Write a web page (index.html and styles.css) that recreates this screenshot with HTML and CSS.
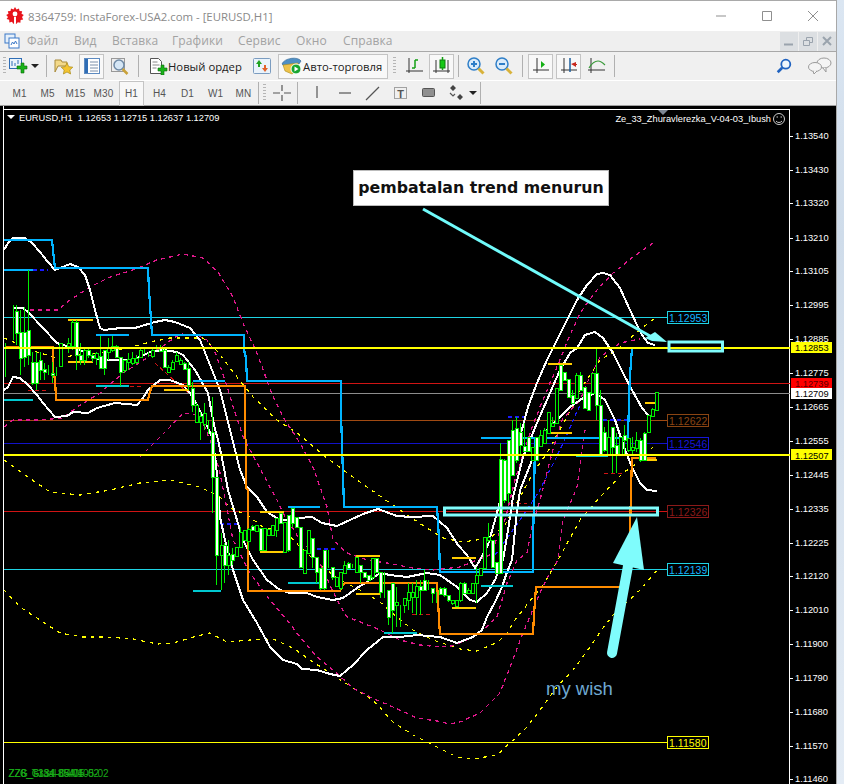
FILE: index.html
```html
<!DOCTYPE html>
<html lang="ru">
<head>
<meta charset="utf-8">
<title>8364759: InstaForex-USA2.com - [EURUSD,H1]</title>
<link rel="stylesheet" href="styles.css">
</head>
<body>
<div class="desktop">
<div class="window">
  <header class="titlebar">
    <svg class="appicon" viewBox="0 0 18 18"><path class="gear" d="M9 0l1.500 2.500 2.500-1 .5 2.600 2.700.1-.7 2.600 2.300 1.200L16 10l1.200 2.400-2.600.7-.2 2.700-2.600-.6L10.400 17 9 15l-1.600 2-1.400-2.200-2.600.6-.2-2.700-2.600-.7L2 10 .2 8l2.300-1.200-.7-2.600 2.700-.1L5 1.500l2.500 1z"/><circle class="gearhole" cx="9" cy="7" r="2.400"/><path class="gearhole" d="M8 10h2v6H8z"/></svg>
    <span class="title">8364759: InstaForex-USA2.com - [EURUSD,H1]</span>
    <div class="caption">
      <svg class="capbtn" viewBox="0 0 46 30"><path d="M18 15h10"/></svg>
      <svg class="capbtn" viewBox="0 0 46 30"><path d="M18.500 10.500h9v9h-9z"/></svg>
      <svg class="capbtn" viewBox="0 0 46 30"><path d="M18 10l10 10M28 10L18 20"/></svg>
    </div>
  </header>
  <nav class="menubar">
    <svg class="mdiicon" viewBox="0 0 16 16"><rect x="1" y="1" width="10" height="9" class="mdi1"/><rect x="5" y="5" width="10" height="10" class="mdi2"/><path class="mdi3" d="M7 12l1.500-3 1.500 2 1.500-3 1.500 3"/></svg>
    <span class="mi mi-file">Файл</span><span class="mi mi-view">Вид</span><span class="mi mi-ins">Вставка</span><span class="mi mi-charts">Графики</span><span class="mi mi-srv">Сервис</span><span class="mi mi-win">Окно</span><span class="mi mi-help">Справка</span>
    <div class="mdibtns">
      <span class="mdibtn"><svg viewBox="0 0 18 18"><path d="M4 12.500h9" class="mdistroke"/></svg></span>
      <span class="mdibtn"><svg viewBox="0 0 18 18"><path d="M4.500 8.500h6v5h-6zM7.500 8V5.500h6v5h-3" class="mdithin"/></svg></span>
      <span class="mdibtn"><svg viewBox="0 0 18 18"><path d="M5 5l8 8M13 5l-8 8" class="mdistroke"/></svg></span>
    </div>
  </nav>
  <div class="toolrow row1">
    <span class="grip"></span>
    <span class="b w-new">
      <svg class="ic" viewBox="0 0 20 18"><rect x="1.500" y="1.500" width="12" height="10" class="bluebox"/><path class="bluethin" d="M4 4v5M7 6v3M10 3v4"/><path class="plus" d="M10 7h4V4h3v3h3v3h-3v4h-3v-4h-4z" transform="translate(-1 2)"/></svg>
      <i class="caret"></i>
    </span>
    <span class="sep s1"></span>
    <span class="b"><svg class="ic" viewBox="0 0 20 18"><path class="folder" d="M1 3h6l1 2h5v4H4l-3 6z"/><path class="star" d="M13 6l1.800 3.700 4 .5-3 2.800.8 4-3.600-2-3.600 2 .8-4-3-2.800 4-.5z"/></svg></span>
    <span class="b pressed"><svg class="ic" viewBox="0 0 20 18"><rect x="2.500" y="1.500" width="15" height="15" class="winbox"/><path class="winbar" d="M3 2h3v14H3z"/><path class="winlines" d="M8 5h8M8 8h8M8 11h8M8 14h8"/></svg></span>
    <span class="b"><svg class="ic" viewBox="0 0 20 18"><rect x="1.500" y="1.500" width="13" height="13" class="greybox"/><circle cx="9" cy="8" r="5" class="lens"/><path class="handle" d="M12.500 12l5 5"/></svg></span>
    <span class="sep s2"></span>
    <span class="b w-order">
      <svg class="ic" viewBox="0 0 20 18"><path class="paper" d="M2.500 1.500h8l3 3v12h-11z"/><path class="paperl" d="M4.500 5h5M4.500 8h7M4.500 11h4"/><path class="plus" d="M11 9h3V6h3v3h3v3h-3v4h-3v-4h-3z" transform="translate(-1 2)"/></svg>
      <span class="tt">Новый ордер</span>
    </span>
    <span class="b w-ud"><svg class="ic" viewBox="0 0 20 18"><rect x="1.500" y="1.500" width="17" height="15" rx="1" class="udbox"/><path class="up" d="M7 3l3 4H8v3H6V7H4z"/><path class="down" d="M13 15l-3-4h2V8h2v3h2z"/></svg></span>
    <span class="b w-auto pressed">
      <svg class="ic hat" viewBox="0 0 22 20"><path class="hatb" d="M1 8c2-6 16-8 19-3l-2 3-15 2z"/><path class="hatf" d="M2 9l15-2 1 6-7 5-7-3z"/><circle cx="15" cy="13" r="5" class="play"/><path class="playt" d="M13.500 10.500l4 2.500-4 2.500z"/></svg>
      <span class="tt">Авто-торговля</span>
    </span>
    <span class="grip g2"></span>
    <span class="b w-c1"><svg class="ic" viewBox="0 0 20 18"><path class="axes" d="M4 1v15M1 14h17"/><path class="gl" d="M10 3v8M10 11H7M10 3h3"/></svg></span>
    <span class="b pressed w-c2"><svg class="ic" viewBox="0 0 20 18"><path class="axes" d="M4 3v13M1 14h17M16 3v13"/><rect x="8" y="3" width="5" height="8" class="cdl"/><path class="gl" d="M10.500 0v3M10.500 11v2"/></svg></span>
    <span class="sep s3"></span>
    <span class="b w-zi"><svg class="ic" viewBox="0 0 20 18"><circle cx="8" cy="7" r="6" class="zl"/><path class="zm" d="M5 7h6M8 4v6"/><path class="zh" d="M12.500 11.500l5 5"/></svg></span>
    <span class="b w-zo"><svg class="ic" viewBox="0 0 20 18"><circle cx="8" cy="7" r="6" class="zl"/><path class="zm" d="M5 7h6"/><path class="zh" d="M12.500 11.500l5 5"/></svg></span>
    <span class="sep s4"></span>
    <span class="b pressed w-s1"><svg class="ic" viewBox="0 0 20 18"><path class="axes" d="M6 1v15M2 13h16"/><path class="tri" d="M10 4l4 3.500-4 3.500z"/></svg></span>
    <span class="b pressed w-s2"><svg class="ic" viewBox="0 0 20 18"><path class="axes" d="M5 1v15M2 13h16"/><path class="bluev" d="M11 1v14"/><path class="redt" d="M12 7l5-2v2h1v1h-1v2z"/></svg></span>
    <span class="b w-s3"><svg class="ic" viewBox="0 0 20 18"><path class="axes" d="M4 1v15M1 13h17"/><path class="gc" d="M2 11c3-5 6-7 9-7 3 0 5 2 7 4"/></svg></span>
    <span class="sep s5"></span>
    <div class="rtools">
      <svg class="ic rs" viewBox="0 0 20 20"><circle cx="12" cy="8" r="5" class="srch"/><path class="srchh" d="M8 12l-5 5"/></svg>
      <svg class="ic rc" viewBox="0 0 24 18"><ellipse cx="16" cy="6" rx="7" ry="5" class="bub"/><path class="bub" d="M15 11l3 4 0-4"/><ellipse cx="7" cy="10" rx="6.500" ry="4.500" class="bub"/><path class="bub" d="M5 14l1 3 3-3"/></svg>
    </div>
  </div>
  <div class="toolrow row2">
    <span class="tf">M1</span><span class="tf">M5</span><span class="tf">M15</span><span class="tf">M30</span><span class="tf pressed">H1</span><span class="tf">H4</span><span class="tf">D1</span><span class="tf">W1</span><span class="tf">MN</span>
    <span class="sep s6"></span>
    <span class="grip g3"></span>
    <span class="b"><svg class="ic" viewBox="0 0 20 18"><path class="dr" d="M1 9h7M12 9h7M10 1v6M10 11v6"/></svg></span>
    <span class="sep s7"></span>
    <span class="b"><svg class="ic" viewBox="0 0 20 18"><path class="dr" d="M10 2v12"/></svg></span>
    <span class="b"><svg class="ic" viewBox="0 0 20 18"><path class="dr" d="M4 9h12"/></svg></span>
    <span class="b"><svg class="ic" viewBox="0 0 20 18"><path class="dr" d="M3 16L16 3"/></svg></span>
    <span class="b"><svg class="ic" viewBox="0 0 20 18"><rect x="3.500" y="3.500" width="12" height="11" class="tbox"/><text x="9.500" y="13.500" class="tglyph">T</text></svg></span>
    <span class="b"><svg class="ic" viewBox="0 0 20 18"><rect x="3.500" y="4.500" width="12" height="8" rx="1" class="rrect"/></svg></span>
    <span class="b"><svg class="ic" viewBox="0 0 20 18"><path class="arrs" d="M6 1l3 3-3 3-3-3zM13 10l3 3-3 3-3-3z"/><path class="dr" d="M3 9l3 3 2-2"/></svg></span>
    <i class="caret c2"></i>
    <span class="sep s8"></span>
  </div>
  <main class="chart">
    <svg class="plot" viewBox="0 106 836 678">
      <rect class="bg" x="0" y="106" width="836" height="678"/>
      <path class="frame" d="M3.500 106V784M3 109.500H790M789.500 109V784"/>

      <path class="hl cyan" d="M4 317.500H667M4 569.500H667"/>
      <path class="hl red" d="M4 383.500H790M4 511.500H667"/>
      <path class="hl gray" d="M4 393.500H790"/>
      <path class="hl brown" d="M4 420.500H667"/>
      <path class="hl blue" d="M4 443.500H667"/>
      <path class="hl yel1" d="M4 742.500H667"/>

      <path class="dash ydash" d="M4 338L20 345 37 352 57 358 77 355 100 353 127 348 150 342 170 338 203 338 218 352 233 372 253 397 277 420 297 433 327 458 357 480 390 503 410 517 427 528 443 538 463 542 490 538 505 525 520 497 533 473 547 453 567 417 580 390 600 360 617 350 637 332 655 318"/>
      <path class="dash ydash" d="M4 460L25 475 50 492 80 495 110 490 140 483 170 480 200 487 220 497 230 508 247 515 263 527 287 533 300 547 320 565 340 580 360 590 380 602 397 617 413 630 433 640 460 649 477 651 498 642 507 633 517 617 523 610 533 597 543 585 552 570 558 560 580 520 600 497 623 473 637 463 653 447"/>
      <path class="dash ydash" d="M4 590L20 607 43 622 60 633 83 637 107 637 133 639 157 644 173 643 197 636 210 633 227 642 250 640 273 639 293 648 310 660 333 675 353 688 373 700 393 722 413 735 433 745 457 757 473 759 497 755 510 743 527 727 540 710 557 687 573 670 590 647 603 628 613 615 640 590 657 570"/>

      <path class="dash mdash" d="M30 310L58 310 70 300 90 287 110 277 133 270 157 260 183 254 203 258 218 272 233 297 243 323 257 353 273 397 285 420 300 443 313 467 327 507 333 540 347 553 367 560 387 563 413 568 433 570 460 567 490 555 505 520 515 480 530 433 540 407 550 383 560 360 567 342 580 313 597 290 613 273 633 257 653 243"/>
      <path class="dash mdash" d="M4 427L13 420 40 420 63 418 77 407 100 393 123 373 147 358 167 343 180 334 197 335 207 340 215 352 225 380 232 403 243 437 257 463 277 500 283 513 300 540 317 557 337 600 347 617 363 623 380 630 400 640 420 645 440 647 452 646 467 640 483 630 497 617 507 583 517 560 527 553 532 527 540 500 552 453 562 420 580 400 587 383 600 357 620 343 640 339"/>
      <path class="dash mdash" d="M140 457L157 440 170 427 183 413 197 415 203 423 213 447 220 473 233 540 250 573 270 600 287 620 300 637 317 657 333 670 353 688 370 697 393 707 417 718 437 721 450 724 460 722 480 713 500 693 510 667 523 633 540 593 550 573 558 560 563 520 577 487 585 430"/>
      <path class="dash bdash" d="M33 270H48M220 524H237M317 549H337M508 417H528M603 420H628M495 555L520 520 540 490 560 450 580 405"/>
      <path class="dash rdash" d="M28 390H48M123 386H143M155 363L188 393M412 614H432M510 503H527M604 473H623M200 591H221"/>

      <path class="env" d="M4 250L8 243 13 238 25 238 32 243 40 252 48 262 55 270 60 268 70 264 78 267 85 275 90 290 95 310 100 328 104 330 113 329 120 328 135 328 145 325 155 322 165 320 175 322 190 328 200 340 210 365 220 390 230 430 240 470 247 487 257 497 267 512 280 520 288 520 298 518 312 517 322 523 337 526 350 520 363 514 378 509 397 516 412 517 433 516 447 528 458 545 467 555 475 568 480 560 488 545 495 520 503 490 510 460 520 437 528 407 537 383 547 360 557 340 567 320 577 300 587 285 597 274 603 273 610 275 620 288 630 310 637 325 642 335 648 343 655 345"/>
      <path class="env" d="M13 308L23 308 28 312 43 328 57 343 63 345 80 350 100 360 133 360 150 352 163 350 177 352 183 355 195 370 208 393 214 425 218 440 223 463 228 490 237 520 243 540 253 560 267 580 280 590 290 593 307 593 317 597 333 600 343 598 357 588 370 580 380 573 390 575 407 577 427 573 440 575 457 587 470 600 477 602 487 593 495 580 503 560 508 530 513 497 523 457 537 423 550 393 560 370 570 353 577 348 585 335 595 332 603 338 613 353 623 373 632 390 642 408 648 415"/>
      <path class="env" d="M4 390L8 387 13 377 20 378 28 385 37 395 43 403 55 417 67 416 73 412 88 413 97 408 115 403 137 405 143 398 148 390 160 380 170 380 183 385 193 397 203 417 212 437 216 463 220 517 225 540 233 570 243 600 257 623 270 647 283 660 297 664 302 669 317 670 330 674 340 676 353 665 367 650 383 637 400 637 417 635 440 637 457 643 473 637 482 630 487 617 495 602 502 587 507 572 512 560 516 520 520 490 527 473 537 447 547 430 560 417 570 407 583 398 595 393 605 400 615 420 625 450 632 467 640 483 647 490 657 491"/>

      <path class="seg sky" d="M4 240H52L53 250 55 268H148L149 290 151 320 152 335H244V350L246 358 247 381H341V413L342 445 343 475 344 507H437L438 522 439 540 440 572H533V540L534 500 535 438M481 438H628L629 400 630 375 632 348"/>
      <path class="seg sky" d="M4 270H33M96 335H129M193 381H225M288 507H320"/>
      <path class="seg teal" d="M4 400H33M96 386H129M193 591H221M288 583H320M384 633H417M481 586H513M576 456H608"/>
      <path class="seg gold" d="M68 320H93M68 362H93M164 390H189M260 512H284M260 552H284M356 556H380M356 594H380M452 558H476M452 608H476M548 364H572M548 433H572M645 403H656M640 460H657"/>
      <path class="seg orange" d="M5 347H53V377L55 377 56 400H148L150 392 152 386H245V438L246 440V488L248 490V591H340L343 585 345 583H437L438 600 439 620 440 634H533L534 615 535 600 536 587H628L629 560 630 530 631 490 632 458H656"/>

      <path class="wick" d="M5 343V377M13 305V340M16 305V345M20 310V375M24 307V367M28 270V365M32 352V385M36 352V390M40 352V380M44 363V380M48 365V375M52 362V383M56 367V376M60 343V366M68 338V353M72 320V350M76 320V370M80 343V365M84 347V365M88 348V358M92 353V362M96 352V365M100 336V368M104 350V375M108 338V360M112 336V352M116 345V358M120 357V386M124 360V373M128 353V370M132 352V365M136 355V364M140 347V358M144 348V354M148 352V357M152 348V358M156 345V350M160 345V352M164 348V367M168 365V373M172 360V370M176 352V362M180 358V365M184 362V370M188 362V390M192 382V412M196 403V423M200 412V440M204 403V430M208 420V434M212 397V513M216 477V585M221 533V590M224 543V583M228 540V575M232 548V565M236 547V557M240 527V547M244 530V540M248 528V550M252 525V530M256 525V531M260 528V550M264 528V550M268 529V535M272 525V535M276 518V537M280 513V523M284 522V552M288 515V552M292 508V527M296 517V527M300 527V567M304 550V573M308 530V553M312 538V568M316 557V583M320 568V590M324 550V590M328 550V568M332 567V580M336 577V587M340 572V590M344 561V573M348 562V568M352 564V568M356 557V572M360 565V583M364 572V578M368 575V581M372 558V580M376 558V572M380 572V598M384 572V598M388 590V625M392 583V633M396 587V627M400 605V627M404 598V613M408 583V610M412 583V613M416 580V615M420 580V615M424 570V590M428 580V590M432 588V603M436 592V603M440 587V595M444 587V597M448 595V602M452 600V605M456 600V607M460 582V602M464 582V594M468 588V594M472 583V594M476 567V603M480 568V575M484 537V568M488 523V542M492 540V567M496 562V573M500 443V573M504 459V503M508 440V503M512 420V475M516 417V463M520 423V455M524 423V452M528 437V450M532 447V460M536 437V460M540 430V446M544 428V443M548 412V433M552 417V427M556 388V423M560 365V390M564 372V380M568 379V397M572 390V403M576 373V398M580 372V390M584 387V408M588 392V410M592 373V393M596 348V420M600 390V455M604 427V452M608 420V455M612 427V473M616 433V473M620 437V455M624 425V455M628 438V452M632 437V455M636 432V452M640 438V462M644 432V460M648 415V432M652 408V416M656 392V410"/>
      <path class="bodyb" d="M58 343h3V366h-3zM66 343h3V346h-3zM70 322h3V346h-3zM82 350h3V360h-3zM94 353h3V358h-3zM106 348h3V352h-3zM110 346h3V350h-3zM122 360h3V370h-3zM126 359h3V362h-3zM130 358h3V363h-3zM134 358h3V362h-3zM138 350h3V357h-3zM150 350h3V356h-3zM166 367h3V372h-3zM170 362h3V369h-3zM174 355h3V361h-3zM178 360h3V364h-3zM194 405h3V422h-3zM198 416h3V422h-3zM202 413h3V424h-3zM219 545h3V555h-3zM226 555h3V565h-3zM234 547h3V556h-3zM238 532h3V547h-3zM242 530h3V540h-3zM246 529h3V541h-3zM254 525h3V531h-3zM262 528h3V550h-3zM266 529h3V535h-3zM270 525h3V535h-3zM274 518h3V530h-3zM282 522h3V552h-3zM302 550h3V573h-3zM306 530h3V553h-3zM334 577h3V586h-3zM338 572h3V588h-3zM342 565h3V573h-3zM354 557h3V572h-3zM370 558h3V577h-3zM394 602h3V605h-3zM402 598h3V605h-3zM406 592h3V600h-3zM410 592h3V597h-3zM414 586h3V597h-3zM450 600h3V603h-3zM454 600h3V606h-3zM458 583h3V600h-3zM466 590h3V593h-3zM470 583h3V593h-3zM474 575h3V583h-3zM478 568h3V575h-3zM482 537h3V568h-3zM486 537h3V540h-3zM530 447h3V460h-3zM538 435h3V446h-3zM542 430h3V443h-3zM546 412h3V433h-3zM550 423h3V426h-3zM554 388h3V423h-3zM574 375h3V398h-3zM590 373h3V393h-3zM606 437h3V455h-3zM618 437h3V455h-3zM626 438h3V450h-3zM630 447h3V450h-3zM634 440h3V448h-3zM646 415h3V432h-3zM650 409h3V416h-3zM654 392h3V410h-3z"/>
      <path class="bodyw" d="M14 311h3V333h-3zM18 332h3V358h-3zM22 332h3V357h-3zM26 330h3V355h-3zM30 362h3V383h-3zM34 362h3V383h-3zM38 360h3V370h-3zM42 369h3V372h-3zM50 373h3V375h-3zM74 322h3V355h-3zM78 355h3V360h-3zM86 350h3V355h-3zM90 355h3V358h-3zM98 356h3V368h-3zM102 350h3V368h-3zM114 346h3V357h-3zM118 357h3V372h-3zM158 347h3V351h-3zM162 350h3V367h-3zM182 363h3V369h-3zM186 368h3V385h-3zM190 388h3V405h-3zM210 432h3V477h-3zM214 477h3V555h-3zM222 545h3V565h-3zM230 554h3V560h-3zM250 526h3V530h-3zM258 528h3V550h-3zM278 513h3V523h-3zM286 515h3V550h-3zM290 508h3V523h-3zM294 517h3V527h-3zM298 527h3V567h-3zM310 538h3V557h-3zM314 557h3V572h-3zM318 568h3V588h-3zM322 550h3V588h-3zM330 567h3V577h-3zM346 563h3V568h-3zM358 565h3V572h-3zM362 572h3V577h-3zM366 575h3V580h-3zM374 558h3V572h-3zM378 572h3V592h-3zM386 590h3V617h-3zM390 583h3V610h-3zM418 586h3V590h-3zM422 580h3V590h-3zM430 588h3V593h-3zM438 588h3V594h-3zM442 588h3V595h-3zM446 595h3V600h-3zM462 583h3V593h-3zM490 540h3V567h-3zM494 562h3V573h-3zM498 459h3V573h-3zM502 460h3V500h-3zM506 440h3V493h-3zM510 430h3V475h-3zM514 428h3V460h-3zM518 432h3V445h-3zM522 446h3V451h-3zM526 437h3V451h-3zM534 437h3V460h-3zM558 365h3V390h-3zM562 372h3V380h-3zM566 379h3V397h-3zM570 395h3V403h-3zM578 375h3V390h-3zM582 387h3V408h-3zM586 392h3V410h-3zM594 373h3V405h-3zM598 405h3V455h-3zM602 432h3V450h-3zM610 427h3V447h-3zM614 445h3V455h-3zM622 435h3V440h-3zM638 440h3V460h-3zM642 433h3V460h-3z"/>
      <path class="seg yellowthick" d="M4 347.500H790M4 455H790"/>

      <path class="dim" d="M658 110h10l-5 5z"/>
      <path class="wtri" d="M7 115h8l-4 4z"/>
      <text x="19" y="121" class="txt">EURUSD,H1  1.12653 1.12715 1.12637 1.12709</text>
      <text x="771" y="122" class="txt end">Ze_33_Zhuravlerezka_V-04-03_Ibush</text>
      <circle cx="779" cy="119" r="5.500" class="smile"/><path class="smile" d="M776 121c1.500 2 4.500 2 6 0M776.500 117h1.500M780.500 117h1.500"/>

      <g class="tgs">
        <rect x="667.500" y="311.500" width="41" height="12" class="t-cy"/><text x="669" y="321.500" class="tg cyt">1.12953</text>
        <rect x="667.500" y="414.500" width="41" height="12" class="t-br"/><text x="669" y="424.500" class="tg brt">1.12622</text>
        <rect x="667.500" y="437.500" width="41" height="12" class="t-bl"/><text x="669" y="447.500" class="tg blt">1.12546</text>
        <rect x="667.500" y="505.500" width="41" height="12" class="t-rd"/><text x="669" y="515.500" class="tg rdt">1.12326</text>
        <rect x="667.500" y="563.500" width="41" height="12" class="t-cy"/><text x="669" y="573.500" class="tg cyt">1.12139</text>
        <rect x="667.500" y="736.500" width="41" height="12" class="t-ye"/><text x="669" y="746.500" class="tg yet">1.11580</text>
      </g>
      <g class="axis">
        <path class="tick" d="M790 136h3M790 170h3M790 203h3M790 238h3M790 271h3M790 305h3M790 339h3M790 373h3M790 407h3M790 441h3M790 475h3M790 509h3M790 543h3M790 576h3M790 610h3M790 644h3M790 678h3M790 712h3M790 746h3M790 779h3"/>
        <g class="axl">
        <text x="795" y="139.500" class="ax">1.13540</text>
        <text x="795" y="173.500" class="ax">1.13430</text>
        <text x="795" y="207" class="ax">1.13320</text>
        <text x="795" y="241.500" class="ax">1.13210</text>
        <text x="795" y="275" class="ax">1.13105</text>
        <text x="795" y="308.500" class="ax">1.12995</text>
        <text x="795" y="342.500" class="ax">1.12885</text>
        <text x="795" y="376.500" class="ax">1.12775</text>
        <text x="795" y="410.500" class="ax">1.12665</text>
        <text x="795" y="444.500" class="ax">1.12555</text>
        <text x="795" y="478.500" class="ax">1.12445</text>
        <text x="795" y="512.500" class="ax">1.12335</text>
        <text x="795" y="546.500" class="ax">1.12225</text>
        <text x="795" y="579.500" class="ax">1.12120</text>
        <text x="795" y="613.500" class="ax">1.12010</text>
        <text x="795" y="647.500" class="ax">1.11900</text>
        <text x="795" y="681.500" class="ax">1.11790</text>
        <text x="795" y="715.500" class="ax">1.11680</text>
        <text x="795" y="749.500" class="ax">1.11570</text>
        <text x="795" y="783" class="ax">1.11460</text>
        </g>
        <rect x="791" y="342" width="41" height="11" class="a-ye"/><text x="795" y="351" class="ax dk">1.12853</text>
        <rect x="791" y="378" width="41" height="11" class="a-rd"/><text x="795" y="387" class="ax rdk">1.12739</text>
        <rect x="791" y="388" width="41" height="11" class="a-wh"/><text x="795" y="397" class="ax dk">1.12709</text>
        <rect x="791" y="449" width="41" height="11" class="a-ye"/><text x="795" y="458.500" class="ax dk">1.12507</text>
      </g>

      <path class="ann" d="M423 209L650 336"/>
      <path class="annf" d="M667 342L652 341 645 338 655 332z"/>
      <rect x="669" y="342" width="53.500" height="9" class="annbox"/>
      <rect x="444.500" y="508" width="213" height="7" class="annbox"/>
      <path class="annthick" d="M612 653L628 566"/>
      <path class="annf" d="M637 517L644 570 613 563z"/>

      <text x="8.500" y="777" class="zz">ZZ8_Graal-04/05-02</text>
      <text x="8.500" y="777" class="zz">ZZ6_T334-854/105-02</text>
      <text x="20" y="777" class="zz">G_s134-85/04</text>
      <text x="546" y="695" class="wish">my wish</text>
    </svg>
    <div class="callout">pembatalan trend menurun</div>
  </main>
</div>
<aside class="strip"></aside>
</div>
</body>
</html>
```
FILE: styles.css
```css
html,body{margin:0;padding:0;background:#fff}
body{width:844px;height:784px;overflow:hidden;font-family:"Open Sans","Noto Sans",sans-serif}
.desktop{display:flex;width:844px;height:784px}
.window{width:837px;display:flex;flex-direction:column;background:#f0f0f0;box-sizing:border-box;border-right:1px solid #a8a8a8}
.strip{flex:1;background:linear-gradient(#dbe6f2,#cfdcea 30%,#e4ecf5)}

.titlebar{height:30px;display:flex;align-items:center;background:#fff;border-top:1px solid #a9a9a9;padding-left:6px}
.appicon{width:18px;height:18px;margin-right:4px}
.gear{fill:#e8141c}
.gearhole{fill:#fff}
.title{font-size:11.400px;color:#8a8a8a;white-space:nowrap}
.caption{margin-left:auto;display:flex}
.capbtn{width:46px;height:30px}
.capbtn path{fill:none;stroke:#8f8f8f;stroke-width:1}

.menubar{height:20px;position:relative;display:flex;align-items:center;background:#efefef}
.mdiicon{width:16px;height:16px;position:absolute;left:4px;top:2px}
.mdi1{fill:#e6f0fa;stroke:#3a78c8}
.mdi2{fill:#fff;stroke:#3a78c8}
.mdi3{fill:none;stroke:#3a78c8}
.mi{position:absolute;top:2px;font-size:12px;line-height:16px;color:#a2a2a2;letter-spacing:.1px}
.mi-file{left:27px}.mi-view{left:74px}.mi-ins{left:112px}.mi-charts{left:172px}.mi-srv{left:238px}.mi-win{left:296px}.mi-help{left:343px}
.mdibtns{margin-left:auto;display:flex;gap:1px;height:19px}
.mdibtn{width:18px;background:#dcdfe2;display:block}
.mdibtn svg{width:18px;height:18px;display:block}
.mdistroke{fill:none;stroke:#9aa3ad;stroke-width:2}
.mdithin{fill:none;stroke:#9aa3ad;stroke-width:1}

.toolrow{display:flex;align-items:center;box-sizing:border-box;border-top:1px solid #a8a8a8;background:#f0f0f0}
.row1{height:29px;padding-left:3px;position:relative}
.row2{height:26px;padding-left:7px;border-top:1px solid #fff;border-bottom:1px solid #a0a0a0;gap:3px}
.grip{width:3px;height:18px;background:repeating-linear-gradient(#b5b5b5 0 1px,#f0f0f0 1px 3px);flex:none}
.b{width:25px;height:25px;display:flex;align-items:center;justify-content:center;flex:none;box-sizing:border-box;margin-right:3px}
.pressed{background:#f8f8f8;border:1px solid #c4c4c4}
.ic{width:20px;height:18px;flex:none;display:block}
.sep{width:1px;height:22px;background:#b0b0b0;flex:none}
.w-new{width:34px;margin-left:2px;margin-right:0;justify-content:flex-start}
.caret{width:0;height:0;border:4px solid transparent;border-top:4px solid #222;border-bottom:0;margin-left:3px;flex:none}
.s1{margin:0 4px 0 4px}
.s2{margin:0 9px 0 3px}
.w-order{width:98px;margin-right:3px;justify-content:flex-start}
.tt{font-size:11.300px;color:#222;white-space:nowrap;margin-left:0}
.w-ud{margin-right:4px}
.w-auto{width:110px;justify-content:flex-start;padding-left:2px;margin-right:5px}
.w-auto .tt{margin-left:0}
.hat{width:22px;height:20px}
.g2{margin-right:6px}
.w-c1{margin-right:2px}
.w-c2{margin-right:4px}
.s3{margin-right:4px}
.w-zi{margin-right:3px}
.w-zo{margin-right:6px}
.s4{margin-right:5px}
.s5{margin-left:2px}
.rtools{position:absolute;right:0;top:0;height:28px;display:flex;align-items:center}
.rs{margin-right:14px}
.rc{width:24px;margin-right:4px}

.tf{width:25px;height:25px;box-sizing:border-box;display:flex;align-items:center;justify-content:center;font-size:10px;color:#555;flex:none;font-family:"Liberation Sans",sans-serif;letter-spacing:.1px}
.row2 .b{margin-right:0}
.s6{margin-left:-1px;height:22px}
.g3{margin-left:1px}
.s7{margin:0 3px 0 0}
.c2{margin-left:-3px}
.s8{margin-left:0}

.bluebox{fill:#eaf3fb;stroke:#2f6db5}
.bluethin{fill:none;stroke:#2f6db5}
.plus{fill:#19b219;stroke:#0c6a0c;stroke-width:.6}
.folder{fill:#f3d98a;stroke:#a98b3a}
.star{fill:#f4c430;stroke:#a98b1a;stroke-width:.7}
.winbox{fill:#fff;stroke:#5d8ac0}
.winbar{fill:#2f6db5}
.winlines{stroke:#7a8ea8;fill:none}
.greybox{fill:#eee;stroke:#999}
.lens{fill:#d5e6f5;stroke:#6f8aa6;stroke-width:1.500}
.handle{stroke:#c9a23a;stroke-width:2.500}
.paper{fill:#fff;stroke:#555}
.paperl{stroke:#888;fill:none}
.udbox{fill:#eaf3fb;stroke:#7b9cc0}
.up{fill:#21a321}
.down{fill:#e2622a}
.hatb{fill:#4f8fc4;stroke:#2a5f8f;stroke-width:.6}
.hatf{fill:#eec24a;stroke:#a98b1a;stroke-width:.6}
.play{fill:#18a62f;stroke:#fff}
.playt{fill:#fff}
.axes{fill:none;stroke:#333;stroke-width:1}
.gl{fill:none;stroke:#13a013;stroke-width:1.500}
.cdl{fill:#14c814;stroke:#0d7a0d}
.zl{fill:#dcecfa;stroke:#2f7fc8;stroke-width:1.500}
.zm{stroke:#2f7fc8;stroke-width:2;fill:none}
.zh{stroke:#d8b23a;stroke-width:3}
.tri{fill:#14b014}
.bluev{stroke:#1d5f9e;stroke-width:1.500}
.redt{fill:#c8281e}
.gc{fill:none;stroke:#3a9a3a;stroke-width:1.200}
.srch{fill:#eef5fc;stroke:#1f62c0;stroke-width:2}
.srchh{stroke:#1f62c0;stroke-width:3}
.bub{fill:#f4f4f4;stroke:#9a9a9a}
.dr{fill:none;stroke:#555;stroke-width:1.200}
.tbox{fill:none;stroke:#555;stroke-dasharray:1 1}
.tglyph{font:bold 11px "Liberation Sans",sans-serif;fill:#555;text-anchor:middle}
.rrect{fill:#8f8f8f;stroke:#555}
.arrs{fill:#444}

.chart{flex:1;position:relative;background:#000;min-height:0}
.plot{display:block;width:836px;height:678px}
.bg{fill:#000}
.frame{fill:none;stroke:#fff;stroke-width:1;shape-rendering:crispEdges}
.hl{fill:none;stroke-width:1;shape-rendering:crispEdges}
.cyan{stroke:#1fd3e4}.red{stroke:#d01414}.gray{stroke:#8c8c8c}.brown{stroke:#a04a12}.blue{stroke:#1212c8}.yel1{stroke:#ffff00}
.dash{fill:none;shape-rendering:crispEdges}
.ydash{stroke:#ffff00;stroke-width:1.200;stroke-dasharray:3.500 5}
.mdash{stroke:#e0188c;stroke-width:1.300;stroke-dasharray:4 4}
.bdash{stroke:#1a1aff;stroke-width:1.300;stroke-dasharray:4 3}
.rdash{stroke:#d01414;stroke-width:1;stroke-dasharray:4 3}
.env{fill:none;stroke:#fff;stroke-width:2;shape-rendering:crispEdges}
.seg{fill:none;stroke-width:2.200;shape-rendering:crispEdges}
.sky{stroke:#00b4ff}
.teal{stroke:#00c8d0}
.gold{stroke:#ffcc00}
.orange{stroke:#ff8c00}
.yellowthick{stroke:#ffff00;stroke-width:2}
.wick{fill:none;stroke:#00f000;stroke-width:1;shape-rendering:crispEdges;transform:translateX(.5px)}
.bodyb{fill:#000;stroke:#00f000;stroke-width:1;shape-rendering:crispEdges;transform:translateX(1px)}
.bodyw{fill:#fff;stroke:#00f000;stroke-width:1;shape-rendering:crispEdges;transform:translateX(1px)}
.dim{fill:#7c8794}
.wtri{fill:#fff}
.txt{font:9.270px "Liberation Sans",sans-serif;fill:#fff;white-space:pre}
.end{text-anchor:end}
.smile{fill:none;stroke:#ccc;stroke-width:1}
.tg{font:10.500px "Liberation Sans",sans-serif;letter-spacing:.05px}
.tgs rect{fill:#000;stroke-width:1;shape-rendering:crispEdges}
.t-cy{stroke:#1fd3e4}.cyt{fill:#12b4ff}
.t-br{stroke:#8a4513}.brt{fill:#8a4513}
.t-bl{stroke:#1616d8}.blt{fill:#1616d8}
.t-rd{stroke:#8c1a1a}.rdt{fill:#8c1a1a}
.t-ye{stroke:#ffff00}.yet{fill:#ffff00}
.tick{stroke:#fff;fill:none;shape-rendering:crispEdges}
.axl{transform:translateY(-1px)}
.ax{font:9.300px "Liberation Sans",sans-serif;fill:#fff}
.dk{fill:#000}
.rdk{fill:#5a0000}
.a-ye{fill:#ffff00}.a-rd{fill:#ff0000}.a-wh{fill:#fff}
.ann{fill:none;stroke:#70fbfb;stroke-width:3}
.annf{fill:#7ffcfc}
.annbox{fill:none;stroke:#7ffcfc;stroke-width:3}
.annthick{fill:none;stroke:#7ffcfc;stroke-width:10;stroke-linecap:round}
.zz{font:10px "Liberation Sans",sans-serif;fill:#18a818}
.wish{font:18.500px "Liberation Sans",sans-serif;fill:#6fa9d2}
.callout{position:absolute;left:353px;top:64px;width:256px;height:36px;box-sizing:border-box;background:#fff;color:#111;font:bold 15.800px/33px "DejaVu Sans",sans-serif;text-align:center;white-space:nowrap;border:1px solid #bbb}
```
